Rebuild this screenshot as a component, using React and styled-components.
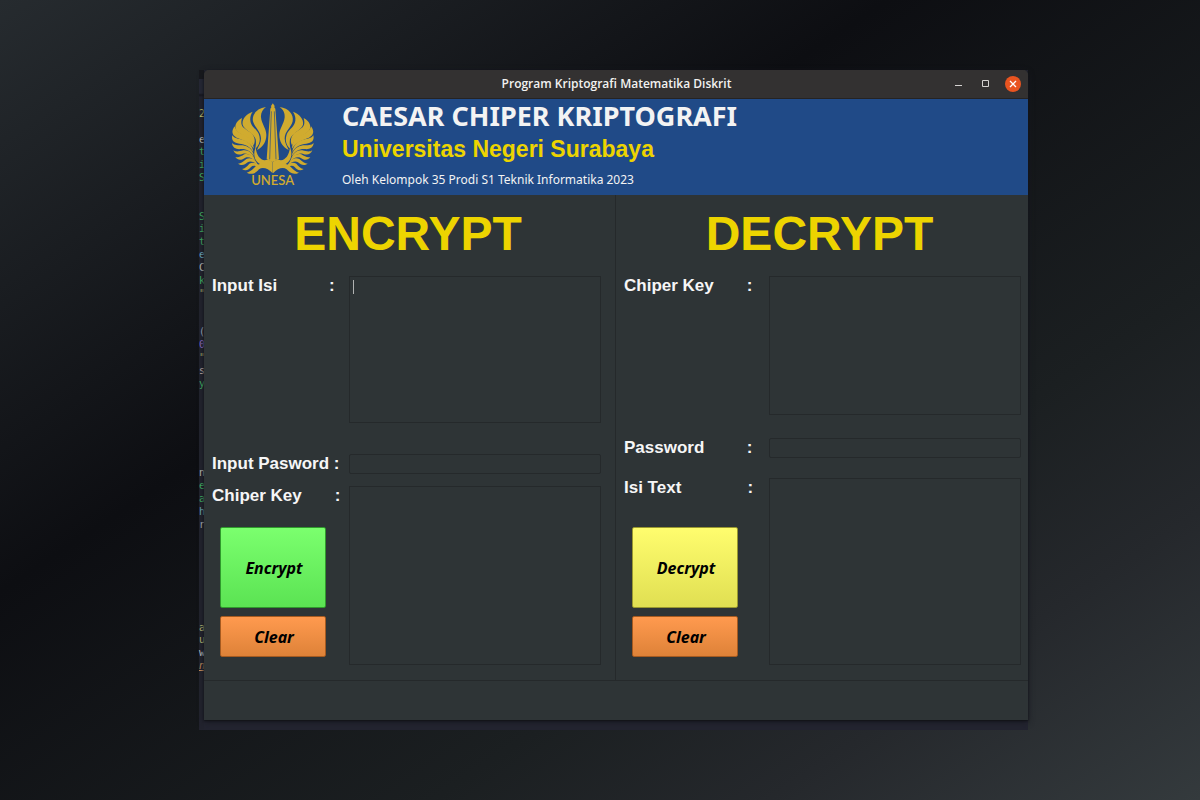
import React from "react";
import styled, { createGlobalStyle } from "styled-components";

const GlobalStyle = createGlobalStyle`
  *, *::before, *::after { box-sizing: border-box; }
  body { margin: 0; }
`;

const ui = `"Noto Sans", sans-serif`;
const sans = `"Liberation Sans", Arial, sans-serif`;
const yellow = "#edd400";
const line = "#25292b";

const Desktop = styled.div`
  display: flex;
  min-height: 100vh;
  padding: 70px 172px 70px 199px;
  background: linear-gradient(to bottom right, #262b2f 0%, #0d0e12 37%, #1b1f21 68%, #25282c 82%, #343a3d 100%);
`;

const Frame = styled.div`
  display: flex;
  flex: 1;
  min-width: 0;
  background: #232430;
`;

const CodeStrip = styled.pre`
  display: grid;
  grid-template-rows: repeat(44, 1fr);
  width: 5px;
  margin: 0;
  padding: 37px 0 58px;
  background: linear-gradient(#17181c 9px, #262836 9px, #262836 23px, #15161d 25px, #22232e 27px);
  font: 10px "DejaVu Sans Mono", monospace;
`;

const CodeLine = styled.span`
  display: flex;
  align-items: center;
  justify-content: center;
  height: 0;
  margin: auto 0;
  color: ${(p) => p.$color};
  font-style: ${(p) => (p.$link ? "italic" : "normal")};
  text-decoration: ${(p) => (p.$link ? "underline" : "none")};
`;

const Window = styled.main`
  display: flex;
  flex: 1;
  flex-direction: column;
  min-width: 0;
  margin-bottom: 10px;
  border-radius: 5px 5px 0 0;
  background: #2e3436;
  box-shadow: 0 1px 2px #111217, 0 2px 6px #181920;
`;

const TitleBar = styled.div`
  display: grid;
  grid-template-columns: 1fr auto 1fr;
  align-items: center;
  height: 29px;
  padding: 0 7px 0 8px;
  border-bottom: 1px solid #252323;
  border-radius: 5px 5px 0 0;
  background: #333131;
`;

const WindowTitle = styled.div`
  grid-column: 2;
  color: #f2f1f0;
  font: 600 12px/20px "Open Sans", sans-serif;
`;

const WindowControls = styled.div`
  display: flex;
  gap: 12px;
  justify-content: flex-end;
`;

const WindowButton = styled.button`
  width: 16px;
  height: 16px;
  padding: 0;
  border: 0;
  border-radius: 8px;
  background: ${(p) => (p.$close ? "#e95420" : "transparent")};
  svg { display: block; }
`;

const Header = styled.header`
  display: flex;
  gap: 12px;
  height: 96px;
  padding-left: 16px;
  background: #204a87;
`;

const HeaderText = styled.div`
  display: flex;
  flex-direction: column;
`;

const Heading = styled.h1`
  margin: 0;
  color: #f3f3f3;
  font: bold 27px/34px ${ui};
`;

const SubHeading = styled.h2`
  margin: 0;
  color: ${yellow};
  font: bold 23px/32px ${sans};
`;

const Credit = styled.p`
  margin: 5px 0 0;
  color: #f3f3f3;
  font: 12px/20px ${ui};
`;

const Panels = styled.div`
  display: grid;
  grid-template-columns: 1fr 1fr;
  flex: 1;
  border-bottom: 1px solid ${line};
`;

const Panel = styled.form`
  display: flex;
  flex-direction: column;
  padding: ${(p) => (p.$divided ? "9px 14px 15px 8px" : "9px 7px 15px 8px")};
  border-right: ${(p) => (p.$divided ? `1px solid ${line}` : "0")};
`;

const PanelTitle = styled.h2`
  margin: 0 0 12px;
  padding-right: ${(p) => (p.$divided ? "0" : "6px")};
  padding-left: ${(p) => (p.$divided ? "3px" : "0")};
  color: ${yellow};
  font: bold 48px/60px ${sans};
  text-align: center;
`;

const Row = styled.div`
  position: relative;
  display: grid;
  grid-template-columns: ${(p) => p.$labels}px 1fr;
  flex: ${(p) => (p.$fill ? 1 : "none")};
  height: ${(p) => (p.$fill ? "auto" : `${p.$height}px`)};
  margin-bottom: ${(p) => p.$gap || 0}px;
`;

const Side = styled.div`
  display: flex;
  flex-direction: column;
  justify-content: space-between;
  padding-bottom: 8px;
`;

const Label = styled.label`
  color: #f6f6f6;
  font: bold 17px/20px ${sans};
  white-space: pre;
`;

const Area = styled.textarea`
  width: 100%;
  height: 100%;
  padding: 4px;
  border: 1px solid ${line};
  border-radius: 0;
  outline: 0;
  background: #2e3436;
  color: #eeeeec;
  font: 13px ${ui};
  resize: none;
`;

const Entry = styled.input`
  width: 100%;
  height: 20px;
  padding: 0 4px;
  border: 1px solid ${line};
  border-radius: 2px;
  outline: 0;
  background: #2e3436;
  color: #eeeeec;
  font: 13px ${ui};
`;

const Caret = styled.span`
  position: absolute;
  top: 4px;
  left: 141px;
  width: 1px;
  height: 14px;
  background: #b0b2b2;
`;

const Actions = styled.div`
  display: flex;
  flex-direction: column;
  gap: 8px;
  width: 106px;
  margin-left: 8px;
`;

const tones = {
  green: ["#7bff6e", "#5be353", "#2f9a2c"],
  lemon: ["#fffd6e", "#e0df52", "#99982f"],
  orange: ["#ff9a4f", "#de8238", "#a55a20"],
};

const ActionButton = styled.button`
  height: ${(p) => (p.$tall ? 81 : 41)}px;
  padding: 0 0 0 2px;
  border: 1px solid ${(p) => tones[p.$tone][2]};
  border-radius: 2px;
  background: linear-gradient(${(p) => tones[p.$tone][0]}, ${(p) => tones[p.$tone][1]});
  color: #000;
  font: italic bold 16px/20px ${ui};
`;

const StatusBar = styled.footer`
  height: 39px;
`;

const code = {
  0: ["2", "#c9c770"], 2: ["e", "#c8c6be"], 3: ["t", "#46bd66"], 4: ["i", "#46bd66"], 5: ["S", "#46bd66"],
  8: ["S", "#46bd66"], 9: ["i", "#46bd66"], 10: ["t", "#46bd66"], 11: ["e", "#74b4c6"], 12: ["C", "#c8c6be"],
  13: ["k", "#46bd66"], 14: ["\"", "#b5b36a"], 17: ["(", "#b4bac8"], 18: ["0", "#9872cc"], 19: ["\"", "#b5b36a"],
  20: ["s", "#d0b8aa"], 21: ["y", "#46bd66"], 28: ["n", "#c8c6be"], 29: ["e", "#46bd66"], 30: ["a", "#46bd66"],
  31: ["h", "#74b4be"], 32: ["r", "#bdbdbd"], 40: ["a", "#c4c277"], 41: ["u", "#c4c277"], 42: ["w", "#c8c8cc"],
  43: ["n", "#d0935e", true],
};

function Wing(props) {
  return (
    <g {...props}>
      <path d="M138 33C110 37 95 56 99 76C103 94 123 106 123 128C122 142 116 150 111 162C130 152 139 136 139 116C139 98 125 84 123 64C122 50 128 40 138 33Z" />
      <path d="M98 47C78 54 65 70 68 86C73 102 102 112 107 130C109 142 107 148 106 158C121 146 122 128 116 113C109 98 93 92 91 74C90 64 92 56 98 47Z" />
      <path d="M66 66C48 76 41 91 50 104C60 118 90 122 101 148C108 134 103 120 94 111C82 101 68 97 65 86C63 80 64 74 66 66Z" />
      <path d="M44 91C33 105 36 118 50 125C67 132 87 136 101 158C101 139 92 127 78 120C62 113 48 107 44 91Z" />
      <path d="M37 118C33 133 42 142 58 143C76 144 90 152 100 168C98 149 86 138 70 132C54 128 43 128 37 118Z" />
      <path d="M36 141C37 156 50 161 63 159C78 158 92 165 102 180C98 160 84 150 68 148C54 147 43 149 36 141Z" />
      <path d="M40 163C46 177 57 178 69 173C80 170 93 176 104 190C98 170 84 161 70 163C58 166 48 169 40 163Z" />
      <path d="M46 183C54 195 66 192 76 185C86 181 98 186 108 199C102 179 86 171 73 175C63 181 55 186 46 183Z" />
      <path d="M54 203C65 211 75 206 83 199C91 193 102 197 114 208C106 188 90 183 79 189C70 197 63 203 54 203Z" />
      <path d="M66 219C77 227 87 221 93 213C99 207 110 209 122 216C114 200 98 197 88 203C81 211 75 218 66 219Z" />
      <path d="M80 230C98 239 109 229 117 220C128 212 144 217 158 232V198C150 191 142 190 134 193C121 192 109 178 107 154C98 176 104 196 120 204C106 205 98 226 80 230Z" />
    </g>
  );
}

function Crest() {
  return (
    <svg width="110" height="96" viewBox="0 9 330 288" fill="#d0ab2f" role="img" aria-label="UNESA">
      <Wing />
      <Wing transform="matrix(-1 0 0 1 317 0)" />
      <path d="M158.500 22L164 30L163 34L166 38L177 190L158 198L140 190L151 38L154 34L153 30Z" />
      <path d="M154 46L149 190M163 46L168 190" fill="none" stroke="#204a87" strokeWidth="2" />
      <text x="158" y="266" textAnchor="middle" fontFamily="Lato, sans-serif" fontSize="39" fontWeight="600">UNESA</text>
    </svg>
  );
}

function CryptoPanel({ divided, title, labels, first, password, last, tone, action, heights }) {
  const id = title.toLowerCase();
  return (
    <Panel $divided={divided} onSubmit={(e) => e.preventDefault()}>
      <PanelTitle $divided={divided}>{title}</PanelTitle>
      <Row $labels={labels} $height={heights[0]} $gap={heights[1]}>
        <Label htmlFor={`${id}-source`}>{first}</Label>
        <Area id={`${id}-source`} />
        {divided && <Caret />}
      </Row>
      <Row $labels={labels} $height={20} $gap={heights[2]}>
        <Label htmlFor={`${id}-password`}>{password}</Label>
        <Entry id={`${id}-password`} type="text" />
      </Row>
      <Row $labels={labels} $fill>
        <Side>
          <Label htmlFor={`${id}-result`}>{last}</Label>
          <Actions>
            <ActionButton type="submit" $tone={tone} $tall>{action}</ActionButton>
            <ActionButton type="reset" $tone="orange">Clear</ActionButton>
          </Actions>
        </Side>
        <Area id={`${id}-result`} />
      </Row>
    </Panel>
  );
}

const colon = (text, spaces) => `${text}${" ".repeat(spaces)}:`;

export default function App() {
  return (
    <>
      <GlobalStyle />
      <Desktop>
        <Frame>
          <CodeStrip>
            {Array.from({ length: 44 }, (_, i) => {
              const [text, color, link] = code[i] || ["", "#fff"];
              return <CodeLine key={i} $color={color} $link={link}>{text}</CodeLine>;
            })}
          </CodeStrip>
          <Window>
            <TitleBar>
              <WindowTitle>Program Kriptografi Matematika Diskrit</WindowTitle>
              <WindowControls>
                <WindowButton type="button" aria-label="Minimize">
                  <svg width="16" height="16"><path d="M6 9.500h7" stroke="#d5d3d1" /></svg>
                </WindowButton>
                <WindowButton type="button" aria-label="Maximize">
                  <svg width="16" height="16"><path d="M5.500 4.500h6v6h-6z" fill="none" stroke="#d5d3d1" /></svg>
                </WindowButton>
                <WindowButton type="button" aria-label="Close" $close>
                  <svg width="16" height="16"><path d="M5 5l6 6M11 5l-6 6" stroke="#fff" strokeWidth="1.300" /></svg>
                </WindowButton>
              </WindowControls>
            </TitleBar>
            <Header>
              <Crest />
              <HeaderText>
                <Heading>CAESAR CHIPER KRIPTOGRAFI</Heading>
                <SubHeading>Universitas Negeri Surabaya</SubHeading>
                <Credit>Oleh Kelompok 35 Prodi S1 Teknik Informatika 2023</Credit>
              </HeaderText>
            </Header>
            <Panels>
              <CryptoPanel
                divided
                title="ENCRYPT"
                labels={137}
                first={colon("Input Isi", 11)}
                password={colon("Input Pasword", 1)}
                last={colon("Chiper Key", 7)}
                tone="green"
                action="Encrypt"
                heights={[147, 31, 12]}
              />
              <CryptoPanel
                title="DECRYPT"
                labels={145}
                first={colon("Chiper Key", 7)}
                password={colon("Password", 9)}
                last={colon("Isi Text", 14)}
                tone="lemon"
                action="Decrypt"
                heights={[139, 23, 20]}
              />
            </Panels>
            <StatusBar />
          </Window>
        </Frame>
      </Desktop>
    </>
  );
}
